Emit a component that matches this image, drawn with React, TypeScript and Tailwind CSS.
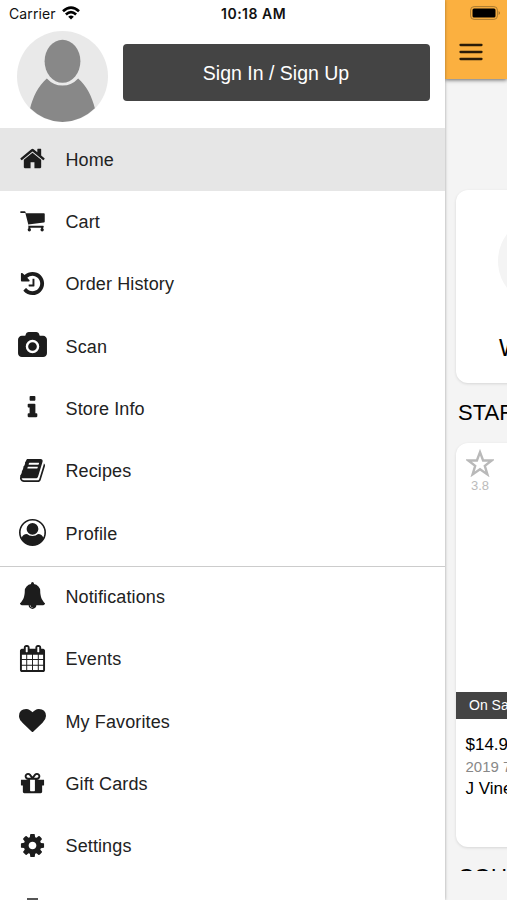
import type { ReactNode } from 'react';

const ICONS = {
  home: 'M1472 992v480q0 26-19 45t-45 19h-384v-384h-256v384h-384q-26 0-45-19t-19-45v-480q0-1 .5-3t.5-3l575-474 575 474q1 2 1 6zm223-69l-62 74q-8 9-21 11h-3q-13 0-21-7l-692-577-692 577q-12 8-24 7-13-2-21-11l-62-74q-8-10-7-23.5t11-21.5l719-599q32-26 76-26t76 26l244 204v-195q0-14 9-23t23-9h192q14 0 23 9t9 23v408l219 182q10 8 11 21.5t-7 23.5z',
  cart: 'M125 280h245q50 0 62 45l22 90h1200q55 0 55 55v500q0 55-58 62l-1040 125v83h990q42 0 42 65t-42 65v50q45 35 45 95 0 110-110 110t-110-110q0-60 45-95v-50h-720v50q45 35 45 95 0 110-110 110t-110-110q0-60 45-95v-235l-200-790h-296q-45 0-45-57t45-57z',
  history:
    'M1664 896q0 156-61 298t-164 245-245 164-298 61q-172 0-327-72.5t-264-204.5q-7-10-6.5-22.5t8.5-20.5l137-138q10-9 25-9 16 2 23 12 73 95 179 147t225 52q104 0 198.5-40.5t163.5-109.5 109.5-163.5 40.5-198.5-40.5-198.5-109.5-163.5-163.5-109.5-198.5-40.5q-98 0-188 35.5t-160 101.5l137 138q31 30 14 69-17 40-59 40h-448q-26 0-45-19t-19-45v-448q0-42 40-59 39-17 69 14l130 129q107-101 244.5-156.5t284.5-55.5q156 0 298 61t245 164 164 245 61 298zm-640-288v448q0 14-9 23t-23 9h-320q-14 0-23-9t-9-23v-64q0-14 9-23t23-9h224v-352q0-14 9-23t23-9h64q14 0 23 9t9 23z',
  camera:
    'M896 672q119 0 203.5 84.5t84.5 203.5-84.5 203.5-203.5 84.5-203.5-84.5-84.5-203.5 84.5-203.5 203.5-84.5zm704-416q106 0 181 75t75 181v896q0 106-75 181t-181 75h-1408q-106 0-181-75t-75-181v-896q0-106 75-181t181-75h224l51-136q19-49 69.5-84.5t103.5-35.5h512q53 0 103.5 35.5t69.5 84.5l51 136h224zm-704 1152q185 0 316.5-131.5t131.5-316.5-131.5-316.5-316.5-131.5-316.5 131.5-131.5 316.5 131.5 316.5 316.5 131.5z',
  info: 'M1216 1344v128q0 26-19 45t-45 19h-512q-26 0-45-19t-19-45v-128q0-26 19-45t45-19h64v-384h-64q-26 0-45-19t-19-45v-128q0-26 19-45t45-19h384q26 0 45 19t19 45v576h64q26 0 45 19t19 45zm-128-1152v192q0 26-19 45t-45 19h-256q-26 0-45-19t-19-45v-192q0-26 19-45t45-19h256q26 0 45 19t19 45z',
  book: 'M1703 478q40 57 18 129l-275 906q-19 64-76.5 107.5t-122.5 43.5h-923q-77 0-148.5-53.5t-99.5-131.5q-24-67-2-127 0-4 3-27t4-37q1-8-3-21.5t-3-19.5q2-11 8-21t16.5-23.5 16.5-23.5q23-38 45-91.5t30-91.5q3-10 .5-30t-.5-28q3-11 17-28t17-23q21-36 42-92t25-90q1-9-2.5-32t.5-28q4-13 22-30.5t22-22.5q19-26 42.5-84.5t27.5-96.5q1-8-3-25.5t-2-26.5q2-8 9-18t18-23 17-21q8-12 16.5-30.5t15-35 16-36 19.5-32 26.5-23.5 36-11.5 47.5 5.5l-1 3q38-9 51-9h761q74 0 114 56t18 130l-274 906q-36 119-71.5 153.5t-128.5 34.5h-869q-27 0-38 15-11 16-1 43 24 70 144 70h923q29 0 56-15.5t35-41.5l300-987q7-22 5-57 38 15 59 43zm-1064 2q-4 13 2 22.5t20 9.5h608q13 0 25.5-9.5t16.5-22.5l21-64q4-13-2-22.5t-20-9.5h-608q-13 0-25.5 9.5t-16.5 22.5zm-83 256q-4 13 2 22.5t20 9.5h608q13 0 25.5-9.5t16.5-22.5l21-64q4-13-2-22.5t-20-9.5h-608q-13 0-25.5 9.5t-16.5 22.5z',
  profile:
    'M896 0a896 896 0 1 1 0 1792a896 896 0 1 1 0-1792zM1612 1230A790 790 0 1 0 180 1230Q250 1010 530 990Q670 1120 896 1120Q1122 1120 1262 990Q1542 1010 1612 1230zM896 270a390 390 0 1 1 0 780a390 390 0 1 1 0-780z',
  bell: 'M912 1696q0-16-16-16-59 0-101.5-42.5t-42.5-101.5q0-16-16-16t-16 16q0 73 51.5 124.5t124.5 51.5q16 0 16-16zm816-288q0 52-38 90t-90 38h-448q0 106-75 181t-181 75-181-75-75-181h-448q-52 0-90-38t-38-90q50-42 91-88t85-119.5 74.5-158.5 50-206 19.5-260q0-152 117-282.5t307-158.5q-8-19-8-39 0-40 28-68t68-28 68 28 28 68q0 20-8 39 190 28 307 158.5t117 282.5q0 139 19.5 260t50 206 74.5 158.5 85 119.5 91 88z',
  calendar:
    'M192 1664h288v-288h-288v288zm352 0h320v-288h-320v288zm-352-352h288v-320h-288v320zm352 0h320v-320h-320v320zm-352-384h288v-288h-288v288zm736 736h320v-288h-320v288zm-384-736h320v-288h-320v288zm768 736h288v-288h-288v288zm-384-352h320v-320h-320v320zm-352-864v-288q0-13-9.5-22.5t-22.5-9.5h-64q-13 0-22.5 9.5t-9.5 22.5v288q0 13 9.5 22.5t22.5 9.5h64q13 0 22.5-9.5t9.5-22.5zm736 864h288v-320h-288v320zm-384-384h320v-288h-320v288zm384 0h288v-288h-288v288zm32-480v-288q0-13-9.5-22.5t-22.5-9.5h-64q-13 0-22.5 9.5t-9.5 22.5v288q0 13 9.5 22.5t22.5 9.5h64q13 0 22.5-9.5t9.5-22.5zm384-64v1280q0 52-38 90t-90 38h-1408q-52 0-90-38t-38-90v-1280q0-52 38-90t90-38h128v-96q0-66 47-113t113-47h64q66 0 113 47t47 113v96h384v-96q0-66 47-113t113-47h64q66 0 113 47t47 113v96h128q52 0 90 38t38 90z',
  heart:
    'M896 1664q-26 0-44-18l-624-602q-10-8-27.5-26t-55.5-65.5-68-97.5-53.5-121-23.5-138q0-220 127-344t351-124q62 0 126.5 21.5t120 58 95.5 68.5 76 68q36-36 76-68t95.5-68.5 120-58 126.5-21.5q224 0 351 124t127 344q0 221-229 450l-623 600q-18 18-44 18z',
  gift: 'M1056 1356v-716h-320v716q0 25 18 38.5t46 13.5h192q28 0 46-13.5t18-38.5zm-456-844h195l-126-161q-26-31-69-31-40 0-68 28t-28 68 28 68 68 28zm688-96q0-40-28-68t-68-28q-43 0-69 31l-125 161h194q40 0 68-28t28-68zm376 256v320q0 14-9 23t-23 9h-96v416q0 40-28 68t-68 28h-1088q-40 0-68-28t-28-68v-416h-96q-14 0-23-9t-9-23v-320q0-14 9-23t23-9h440q-93 0-158.5-65.5t-65.5-158.5 65.5-158.5 158.5-65.5q107 0 168 77l128 165 128-165q61-77 168-77 93 0 158.5 65.5t65.5 158.5-65.5 158.5-158.5 65.5h440q14 0 23 9t9 23z',
  cog: 'M1152 896q0-106-75-181t-181-75-181 75-75 181 75 181 181 75 181-75 75-181zm512-109v222q0 12-8 23t-20 13l-185 28q-19 54-39 91 35 50 107 138 10 12 10 25t-9 23q-27 37-99 108t-94 71q-12 0-26-9l-138-108q-44 23-91 38-16 136-29 186-7 28-36 28h-222q-14 0-24.5-8.5t-11.5-21.5l-28-184q-49-16-90-37l-141 107q-10 9-25 9-14 0-25-11-126-114-165-168-7-10-7-23 0-12 8-23 15-21 51-66.5t54-70.5q-27-50-41-99l-183-27q-13-2-21-12.5t-8-23.5v-222q0-12 8-23t19-13l186-28q14-46 39-92-40-57-107-138-10-12-10-24 0-10 9-23 26-36 98.5-107.5t94.5-71.5q13 0 26 10l138 107q44-23 91-38 16-136 29-186 7-28 36-28h222q14 0 24.5 8.5t11.5 21.5l28 184q49 16 90 37l142-107q9-9 24-9 13 0 25 10 129 119 165 170 7 8 7 22 0 12-8 23-15 21-51 66.5t-54 70.5q26 50 41 98l183 28q13 2 21 12.5t8 23.5z',
};

type IconName = keyof typeof ICONS;

const MAIN_ITEMS: { icon: IconName; label: string }[] = [
  { icon: 'home', label: 'Home' },
  { icon: 'cart', label: 'Cart' },
  { icon: 'history', label: 'Order History' },
  { icon: 'camera', label: 'Scan' },
  { icon: 'info', label: 'Store Info' },
  { icon: 'book', label: 'Recipes' },
  { icon: 'profile', label: 'Profile' },
];

const MORE_ITEMS: { icon: IconName; label: string }[] = [
  { icon: 'bell', label: 'Notifications' },
  { icon: 'calendar', label: 'Events' },
  { icon: 'heart', label: 'My Favorites' },
  { icon: 'gift', label: 'Gift Cards' },
  { icon: 'cog', label: 'Settings' },
];

function MenuItem({
  icon,
  label,
  active = false,
}: {
  icon: IconName;
  label: string;
  active?: boolean;
}) {
  return (
    <a
      className={`flex h-[62.35px] shrink-0 items-center gap-[19.5px] pl-[19px] text-lg tracking-[0.12px] text-[#222] ${
        active ? 'bg-[#e6e6e6]' : ''
      }`}
    >
      <svg
        viewBox="0 0 1792 1792"
        className="-mt-0.5 size-[27px] shrink-0 overflow-visible"
        fill="#1c1c1c"
        fillRule="evenodd"
      >
        <path d={ICONS[icon]} />
      </svg>
      <span>{label}</span>
    </a>
  );
}

function StatusBar() {
  return (
    <div className="flex h-7 shrink-0 items-center pl-[9px] font-['Inter',sans-serif] text-[#111]">
      <span className="w-[47px] text-sm tracking-[0.1px]">Carrier</span>
      <svg viewBox="0 0 18 14" className="-mt-0.5 ml-1.5 h-[14px] w-[18px]" fill="none" stroke="#000" strokeWidth="2.7">
        <path d="M1 5.2Q9-2 17 5.2" />
        <path d="M3.9 8.4Q9 3.8 14.1 8.4" />
        <path d="M6.2 10.7Q9 8.5 11.8 10.7L9 13.5Z" fill="#000" stroke="none" />
      </svg>
      <span className="ml-[141px] text-sm font-semibold tracking-[0.5px]">10:18 AM</span>
    </div>
  );
}

function Avatar() {
  return (
    <svg viewBox="0 0 90 90" className="size-[91px] shrink-0">
      <circle cx="45" cy="45" r="45" fill="#e9e9e9" />
      <path
        d="M29.5 47C21 54 15.5 66 13 76.5Q27 90 45 90T77 76.5C74.5 66 69 54 60.5 47Q54 54 45 54T29.5 47Z"
        fill="#888"
      />
      <ellipse cx="45" cy="30" rx="17.7" ry="21.3" fill="#888" />
    </svg>
  );
}

function Card({ className, children }: { className: string; children: ReactNode }) {
  return (
    <div className={`ml-[11px] w-[180px] shrink-0 rounded-xl bg-white shadow-[0_1px_3px_rgba(0,0,0,0.12)] ${className}`}>
      {children}
    </div>
  );
}

function StorePage() {
  return (
    <main className="flex min-w-0 flex-1 flex-col overflow-hidden whitespace-nowrap bg-[#f4f4f4] text-black">
      <header className="flex h-[79px] shrink-0 flex-col bg-[#fbb040] shadow-[0_1px_4px_rgba(0,0,0,0.6)]">
        <svg viewBox="0 0 32 14" className="ml-[25px] mt-1.5 h-[14px] w-8 shrink-0">
          <rect x="0.6" y="0.6" width="26.8" height="12.8" rx="3.5" fill="none" stroke="#a87a30" />
          <rect x="2.5" y="2.5" width="23" height="9" rx="1.5" fill="#000" />
          <path d="M28.7 5Q31 7 28.7 9Z" fill="#8f6524" />
        </svg>
        <svg viewBox="0 0 24 18" className="ml-[13.5px] mt-[23px] h-[18px] w-6 shrink-0" stroke="#2a1c08" strokeWidth="2.3" strokeLinecap="round">
          <path d="M1.5 2h21M1.5 9h21M1.5 16h21" />
        </svg>
      </header>

      <Card className="mt-[111px] flex h-[193px] flex-col">
        <div className="ml-[42px] mt-[26px] size-[90px] rounded-full bg-[#f4f4f4]" />
        <span className="ml-[43px] mt-[28px] text-[23px] leading-7">Weekly Ad</span>
      </Card>

      <h2 className="ml-[13px] mt-[15px] h-[30px] shrink-0 text-[22px] leading-[30px]">STAFF PICKS</h2>

      <Card className="mt-[15px] flex h-[404px] flex-col">
        <div className="ml-2.5 mt-1.5 flex h-[243px] w-7 shrink-0 flex-col items-center">
          <svg viewBox="0 0 28 28" className="size-7 shrink-0" fill="none" stroke="#b9b9b9" strokeWidth="2.4">
            <path d="M14 3.2l3.1 8.3h8.6l-6.9 5.4 2.6 8.5-7.4-5.1-7.4 5.1 2.6-8.5L2.3 11.5h8.6z" />
          </svg>
          <span className="mt-px text-[13px] leading-4 text-[#bbb]">3.8</span>
        </div>
        <div className="h-[27px] shrink-0 bg-[#444] pl-[13px] text-sm leading-[27px] text-white">On Sale</div>
        <div className="flex flex-col pl-[9.5px] pt-3.5">
          <span className="text-[17px] leading-[23px]">$14.99</span>
          <span className="text-[15px] leading-[21px] text-[#888]">2019 750ml</span>
          <span className="text-[17px] leading-[23px]">J Vineyards</span>
        </div>
      </Card>

      <div className="ml-[13px] mt-[15px] h-[9px] shrink-0 overflow-hidden text-[22px] leading-[30px]">
        <span className="block">COUPONS</span>
      </div>
    </main>
  );
}

export default function App() {
  return (
    <div className="flex h-[900px] w-[507px] overflow-hidden bg-white font-['Liberation_Sans',Arial,sans-serif]">
      <aside className="z-10 flex w-[445px] shrink-0 flex-col overflow-hidden bg-white shadow-[0_0_3px_rgba(0,0,0,0.35)]">
        <StatusBar />
        <div className="flex h-[100.4px] shrink-0 items-start gap-[15px] pl-[16.5px] pt-[3px]">
          <Avatar />
          <button className="mt-[13px] h-[57px] w-[307px] rounded bg-[#444] pt-0.5 text-[19.5px] text-white">
            Sign In / Sign Up
          </button>
        </div>
        <nav className="flex flex-col">
          {MAIN_ITEMS.map((item, index) => (
            <MenuItem key={item.label} {...item} active={index === 0} />
          ))}
          <hr className="-mb-px mt-px border-t border-[#ccc]" />
          {MORE_ITEMS.map((item) => (
            <MenuItem key={item.label} {...item} />
          ))}
          <div className="ml-[27px] mt-[20px] h-0.5 w-[11px] shrink-0 bg-[#555]" />
        </nav>
      </aside>
      <StorePage />
    </div>
  );
}
